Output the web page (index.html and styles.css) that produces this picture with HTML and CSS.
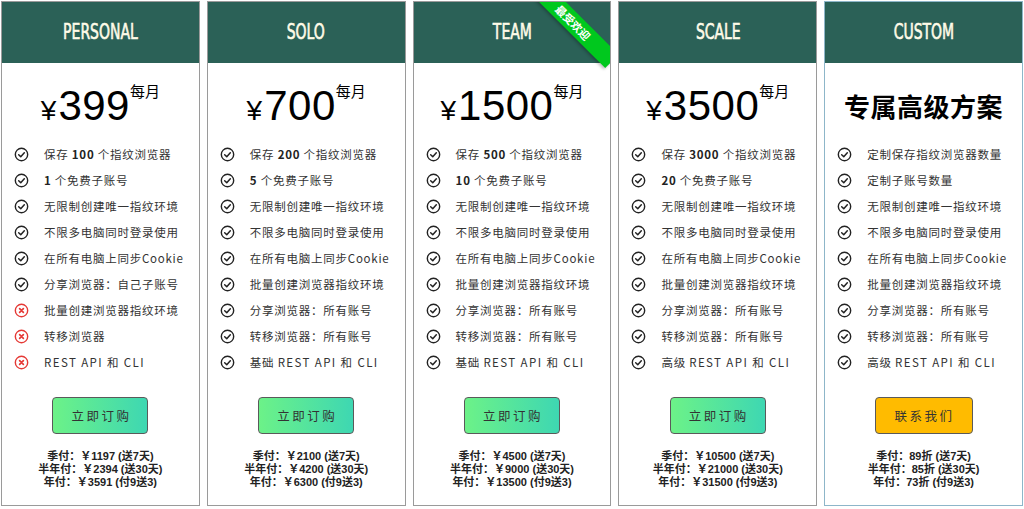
FILE: index.html
```html
<!DOCTYPE html>
<html lang="zh">
<head>
<meta charset="utf-8">
<title>Pricing</title>
<link rel="stylesheet" href="styles.css">
</head>
<body>
<svg width="0" height="0" class="defs">
  <defs>
    <symbol id="ok" viewBox="0 0 16 16">
      <circle cx="8" cy="8" r="6.6" fill="none" stroke="#222" stroke-width="1.5"/>
      <path d="M5 8.3 L7.2 10.4 L11 6.1" fill="none" stroke="#222" stroke-width="1.6" stroke-linecap="round" stroke-linejoin="round"/>
    </symbol>
    <symbol id="no" viewBox="0 0 16 16">
      <circle cx="8" cy="8" r="6.6" fill="none" stroke="#e53935" stroke-width="1.5"/>
      <path d="M6 6 L10 10 M10 6 L6 10" fill="none" stroke="#e53935" stroke-width="1.8" stroke-linecap="round"/>
    </symbol>
  </defs>
</svg>
<div class="plans">
  <div class="card">
    <div class="head"><span class="title">PERSONAL</span></div>
    <div class="price"><span class="cur">¥</span><span class="num">399</span><span class="per">每月</span></div>
    <ul class="features">
      <li><svg class="ic"><use href="#ok"/></svg><span>保存 <b>100</b> 个指纹浏览器</span></li>
      <li><svg class="ic"><use href="#ok"/></svg><span><b>1</b> 个免费子账号</span></li>
      <li><svg class="ic"><use href="#ok"/></svg><span>无限制创建唯一指纹环境</span></li>
      <li><svg class="ic"><use href="#ok"/></svg><span>不限多电脑同时登录使用</span></li>
      <li><svg class="ic"><use href="#ok"/></svg><span>在所有电脑上同步Cookie</span></li>
      <li><svg class="ic"><use href="#ok"/></svg><span>分享浏览器：自己子账号</span></li>
      <li><svg class="ic"><use href="#no"/></svg><span>批量创建浏览器指纹环境</span></li>
      <li><svg class="ic"><use href="#no"/></svg><span>转移浏览器</span></li>
      <li><svg class="ic"><use href="#no"/></svg><span class="lat">REST API 和 CLI</span></li>
    </ul>
    <div class="btn-row"><button class="btn">立即订购</button></div>
    <div class="terms"><p>季付：￥1197 (送7天)</p><p>半年付：￥2394 (送30天)</p><p>年付：￥3591 (付9送3)</p></div>
  </div>

  <div class="card">
    <div class="head"><span class="title">SOLO</span></div>
    <div class="price"><span class="cur">¥</span><span class="num">700</span><span class="per">每月</span></div>
    <ul class="features">
      <li><svg class="ic"><use href="#ok"/></svg><span>保存 <b>200</b> 个指纹浏览器</span></li>
      <li><svg class="ic"><use href="#ok"/></svg><span><b>5</b> 个免费子账号</span></li>
      <li><svg class="ic"><use href="#ok"/></svg><span>无限制创建唯一指纹环境</span></li>
      <li><svg class="ic"><use href="#ok"/></svg><span>不限多电脑同时登录使用</span></li>
      <li><svg class="ic"><use href="#ok"/></svg><span>在所有电脑上同步Cookie</span></li>
      <li><svg class="ic"><use href="#ok"/></svg><span>批量创建浏览器指纹环境</span></li>
      <li><svg class="ic"><use href="#ok"/></svg><span>分享浏览器：所有账号</span></li>
      <li><svg class="ic"><use href="#ok"/></svg><span>转移浏览器：所有账号</span></li>
      <li><svg class="ic"><use href="#ok"/></svg><span>基础 <span class="lat">REST API 和 CLI</span></span></li>
    </ul>
    <div class="btn-row"><button class="btn">立即订购</button></div>
    <div class="terms"><p>季付：￥2100 (送7天)</p><p>半年付：￥4200 (送30天)</p><p>年付：￥6300 (付9送3)</p></div>
  </div>

  <div class="card">
    <div class="head"><span class="title">TEAM</span></div>
    <div class="ribbon">最受欢迎</div>
    <div class="price"><span class="cur">¥</span><span class="num">1500</span><span class="per">每月</span></div>
    <ul class="features">
      <li><svg class="ic"><use href="#ok"/></svg><span>保存 <b>500</b> 个指纹浏览器</span></li>
      <li><svg class="ic"><use href="#ok"/></svg><span><b>10</b> 个免费子账号</span></li>
      <li><svg class="ic"><use href="#ok"/></svg><span>无限制创建唯一指纹环境</span></li>
      <li><svg class="ic"><use href="#ok"/></svg><span>不限多电脑同时登录使用</span></li>
      <li><svg class="ic"><use href="#ok"/></svg><span>在所有电脑上同步Cookie</span></li>
      <li><svg class="ic"><use href="#ok"/></svg><span>批量创建浏览器指纹环境</span></li>
      <li><svg class="ic"><use href="#ok"/></svg><span>分享浏览器：所有账号</span></li>
      <li><svg class="ic"><use href="#ok"/></svg><span>转移浏览器：所有账号</span></li>
      <li><svg class="ic"><use href="#ok"/></svg><span>基础 <span class="lat">REST API 和 CLI</span></span></li>
    </ul>
    <div class="btn-row"><button class="btn">立即订购</button></div>
    <div class="terms"><p>季付：￥4500 (送7天)</p><p>半年付：￥9000 (送30天)</p><p>年付：￥13500 (付9送3)</p></div>
  </div>

  <div class="card">
    <div class="head"><span class="title">SCALE</span></div>
    <div class="price"><span class="cur">¥</span><span class="num">3500</span><span class="per">每月</span></div>
    <ul class="features">
      <li><svg class="ic"><use href="#ok"/></svg><span>保存 <b>3000</b> 个指纹浏览器</span></li>
      <li><svg class="ic"><use href="#ok"/></svg><span><b>20</b> 个免费子账号</span></li>
      <li><svg class="ic"><use href="#ok"/></svg><span>无限制创建唯一指纹环境</span></li>
      <li><svg class="ic"><use href="#ok"/></svg><span>不限多电脑同时登录使用</span></li>
      <li><svg class="ic"><use href="#ok"/></svg><span>在所有电脑上同步Cookie</span></li>
      <li><svg class="ic"><use href="#ok"/></svg><span>批量创建浏览器指纹环境</span></li>
      <li><svg class="ic"><use href="#ok"/></svg><span>分享浏览器：所有账号</span></li>
      <li><svg class="ic"><use href="#ok"/></svg><span>转移浏览器：所有账号</span></li>
      <li><svg class="ic"><use href="#ok"/></svg><span>高级 <span class="lat">REST API 和 CLI</span></span></li>
    </ul>
    <div class="btn-row"><button class="btn">立即订购</button></div>
    <div class="terms"><p>季付：￥10500 (送7天)</p><p>半年付：￥21000 (送30天)</p><p>年付：￥31500 (付9送3)</p></div>
  </div>

  <div class="card card-custom">
    <div class="head"><span class="title">CUSTOM</span></div>
    <div class="price"><span class="custom-title">专属高级方案</span></div>
    <ul class="features">
      <li><svg class="ic"><use href="#ok"/></svg><span>定制保存指纹浏览器数量</span></li>
      <li><svg class="ic"><use href="#ok"/></svg><span>定制子账号数量</span></li>
      <li><svg class="ic"><use href="#ok"/></svg><span>无限制创建唯一指纹环境</span></li>
      <li><svg class="ic"><use href="#ok"/></svg><span>不限多电脑同时登录使用</span></li>
      <li><svg class="ic"><use href="#ok"/></svg><span>在所有电脑上同步Cookie</span></li>
      <li><svg class="ic"><use href="#ok"/></svg><span>批量创建浏览器指纹环境</span></li>
      <li><svg class="ic"><use href="#ok"/></svg><span>分享浏览器：所有账号</span></li>
      <li><svg class="ic"><use href="#ok"/></svg><span>转移浏览器：所有账号</span></li>
      <li><svg class="ic"><use href="#ok"/></svg><span>高级 <span class="lat">REST API 和 CLI</span></span></li>
    </ul>
    <div class="btn-row"><button class="btn btn-contact">联系我们</button></div>
    <div class="terms"><p>季付：89折 (送7天)</p><p>半年付：85折 (送30天)</p><p>年付：73折 (付9送3)</p></div>
  </div>
</div>
</body>
</html>
```

FILE: styles.css
```css
* { box-sizing: border-box; }
html, body { margin: 0; padding: 0; background: #fff; }
body {
  font-family: "Liberation Sans", "Noto Sans CJK SC", sans-serif;
  color: #222;
  width: 1024px;
  height: 509px;
  overflow: hidden;
}
.defs { position: absolute; width: 0; height: 0; }

.plans {
  display: flex;
  gap: 7px;
  padding: 1px 1px 0 1px;
}

.card {
  position: relative;
  width: 199px;
  height: 505px;
  border: 1px solid #9a9a9a;
  overflow: hidden;
  display: flex;
  flex-direction: column;
}
.card-custom { border-color: #8db6c9; }

.head {
  height: 61px;
  background: #2b6157;
  display: flex;
  align-items: center;
  justify-content: center;
}
.title {
  display: inline-block;
  color: #fffbe8;
  font-family: "DejaVu Sans Condensed", "DejaVu Sans", sans-serif;
  font-stretch: condensed;
  font-weight: 400;
  font-size: 21px;
  -webkit-text-stroke: 0.6px #fffbe8;
  transform: scaleX(0.74);
  margin-top: -2px;
}

.ribbon {
  position: absolute;
  top: 11px;
  left: 104px;
  width: 110px;
  height: 19px;
  line-height: 19px;
  background: #00c81e;
  color: #fff;
  font-family: "Noto Sans CJK SC", sans-serif;
  font-weight: 700;
  font-size: 11px;
  text-align: center;
  transform: rotate(45deg);
  box-shadow: 0 2px 3px rgba(0,0,0,0.25);
}

.price {
  height: 78px;
  display: flex;
  align-items: baseline;
  justify-content: center;
  padding-top: 22px;
  color: #000;
}
.cur { font-size: 28px; line-height: 42px; margin-right: 2px; }
.num { font-size: 42px; line-height: 42px; letter-spacing: 0.5px; }
.per {
  align-self: flex-start;
  font-family: "Noto Sans CJK SC", sans-serif;
  font-size: 15px;
  line-height: 15px;
  margin-top: -2px;
}
.custom-title {
  font-family: "Noto Sans CJK SC", sans-serif;
  font-weight: 700;
  font-size: 26px;
  line-height: 42px;
  letter-spacing: 0.5px;
}

.features {
  list-style: none;
  margin: 0;
  padding: 0 0 0 12px;
}
.features li {
  height: 26px;
  display: flex;
  align-items: center;
  gap: 15px;
  font-family: "Noto Sans CJK SC", sans-serif;
  font-size: 11.5px;
  letter-spacing: 0.75px;
  color: #333;
  white-space: nowrap;
}
.features .lat { letter-spacing: 1.4px; }
.features b { font-weight: 700; color: #222; }
.ic { width: 15px; height: 15px; flex: none; }

.btn-row {
  display: flex;
  justify-content: center;
  margin-top: 22px;
}
.btn {
  width: 96px;
  height: 37px;
  border: 1px solid #5a5a5a;
  border-radius: 4px;
  background: linear-gradient(90deg, #6cf288 0%, #3ed7b2 100%);
  font-family: "Noto Sans CJK SC", sans-serif;
  font-size: 12.5px;
  letter-spacing: 2.5px;
  color: #333;
  padding: 0 0 0 2px;
}
.btn-contact {
  width: 98px;
  background: #ffbb00;
}

.terms {
  margin-top: 16px;
  text-align: center;
  font-size: 11px;
  line-height: 13px;
  font-weight: 700;
  color: #222;
}
.terms p { margin: 0; }
```
